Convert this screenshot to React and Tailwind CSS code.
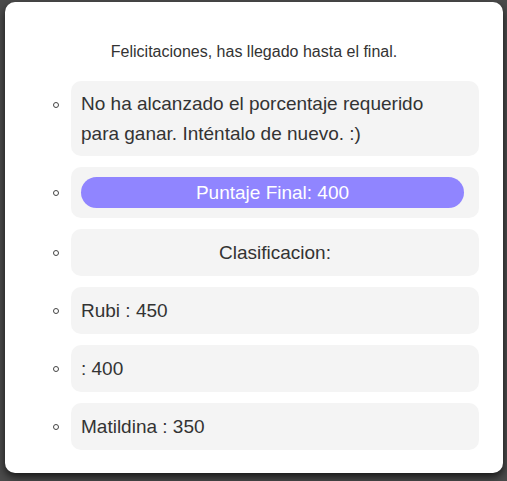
import React from "react";

const items = [
  { kind: "text", content: "No ha alcanzado el porcentaje requerido para ganar. Inténtalo de nuevo. :)" },
  { kind: "score", content: "Puntaje Final: 400" },
  { kind: "center", content: "Clasificacion:" },
  { kind: "text", content: "Rubi : 450" },
  { kind: "text", content: ": 400" },
  { kind: "text", content: "Matildina : 350" },
];

function Bullet({ top }) {
  return (
    <div className={`w-[18px] shrink-0 flex justify-start ${top ? "items-start pt-[21px]" : "items-center"}`}>
      <span className="block w-[6px] h-[6px] rounded-full border border-[#444]" />
    </div>
  );
}

export default function App() {
  return (
    <div
      className="w-[507px] h-[481px] bg-[#4b4b4b] pt-[2px] pl-[5px] overflow-hidden"
      style={{ fontFamily: '"Liberation Sans", Arial, sans-serif' }}
    >
      <div className="w-[498px] h-[471px] bg-white rounded-[10px] shadow-[0_4px_8px_rgba(0,0,0,0.7)] pt-[40px]">
        <p className="text-[16px] leading-[20px] text-[#333] text-center">
          Felicitaciones, has llegado hasta el final.
        </p>
        <ul className="mt-[19px] pl-[48px] pr-[24px] flex flex-col gap-[11px]">
          {items.map((it, i) => (
            <li key={i} className="flex">
              <Bullet top={i === 0} />
              <div className="flex-1 bg-[#f4f4f4] rounded-[10px] text-[19px] text-[#333] leading-[27px]">
                {it.kind === "text" && i === 0 && (
                  <div className="pl-[10px] pr-[34px] py-[8px] leading-[29.5px]">{it.content}</div>
                )}
                {it.kind === "text" && i !== 0 && (
                  <div className="px-[10px] py-[10px]">{it.content}</div>
                )}
                {it.kind === "center" && (
                  <div className="px-[10px] py-[10px] text-center">{it.content}</div>
                )}
                {it.kind === "score" && (
                  <div className="pl-[10px] pr-[15px] py-[10px]">
                    <div className="h-[31px] rounded-full bg-[#9085ff] text-white flex items-center justify-center">
                      {it.content}
                    </div>
                  </div>
                )}
              </div>
            </li>
          ))}
        </ul>
      </div>
    </div>
  );
}
